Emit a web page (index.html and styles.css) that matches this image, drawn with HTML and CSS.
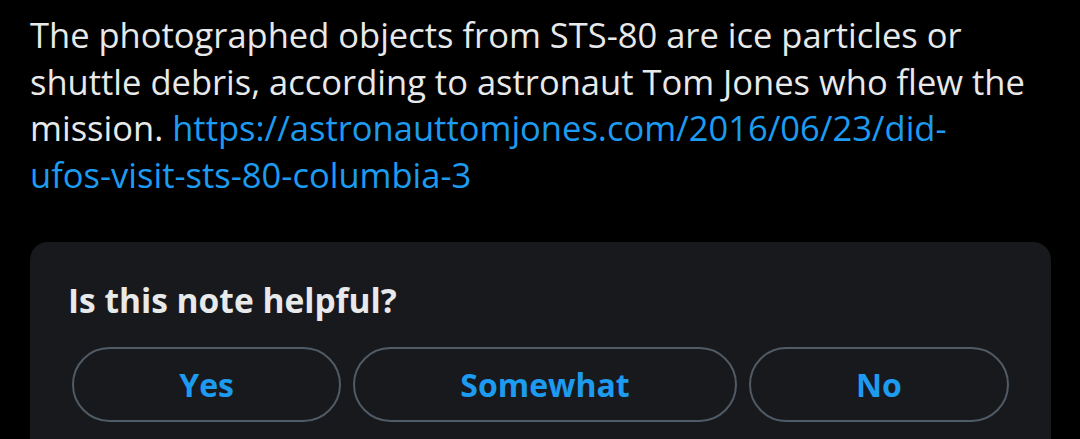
FILE: index.html
```html
<!DOCTYPE html>
<html>
<head>
    <meta charset="UTF-8">
    <meta name="viewport" content="width=device-width, initial-scale=1.0">
    <title>Note</title>
    <link rel="stylesheet" href="styles.css">
</head>
<body>
    <div class="note">
        <p class="note-text">
            The photographed objects from STS-80 are ice particles or shuttle debris, according to astronaut Tom Jones who flew the mission.
            <a href="#" class="note-link">https://astronauttomjones.com/2016/06/23/did-<br>ufos-visit-sts-80-columbia-3</a>
        </p>
        <div class="rate-card">
            <h2 class="rate-title">Is this note helpful?</h2>
            <div class="rate-buttons">
                <button class="rate-btn">Yes</button>
                <button class="rate-btn">Somewhat</button>
                <button class="rate-btn">No</button>
            </div>
        </div>
    </div>
</body>
</html>
```

FILE: styles.css
```css
body {
    margin: 0;
    background-color: #000;
    font-family: "Open Sans", "Noto Sans", sans-serif;
    color: #e7e9ea;
}

.note {
    padding: 12px 29px 0 30px;
}

.note-text {
    margin: 0;
    font-size: 34.5px;
    line-height: 46.5px;
    width: 1010px;
}

.note-link {
    color: #1d9bf0;
    text-decoration: none;
}

.rate-card {
    margin-top: 44px;
    background-color: #18191c;
    border-radius: 18px;
    padding: 38px 42px 40px 38px;
}

.rate-title {
    margin: 0 0 27px 0;
    font-size: 33.5px;
    font-weight: 700;
    line-height: 40px;
}

.rate-buttons {
    display: flex;
    gap: 12px;
    margin-left: 4px;
}

.rate-btn {
    flex: 1 1 auto;
    height: 75px;
    border: 2px solid #505b66;
    border-radius: 38px;
    background: transparent;
    color: #1d9bf0;
    font-family: "Open Sans", "Noto Sans", sans-serif;
    font-size: 32px;
    font-weight: 700;
}
```
